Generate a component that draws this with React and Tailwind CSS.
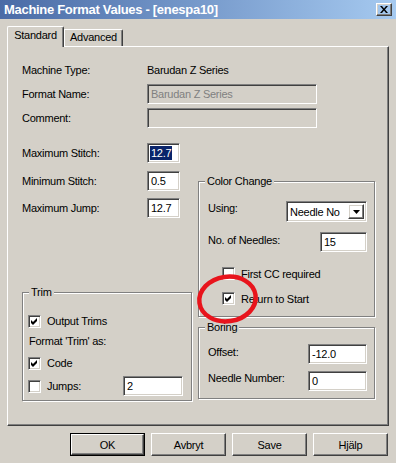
import React from 'react';

const sunken = 'border border-t-[#808080] border-l-[#808080] border-r-white border-b-white shadow-[inset_1px_1px_0_#404040,inset_-1px_-1px_0_#d4d0c8]';
const raised = 'border border-t-white border-l-white border-r-[#404040] border-b-[#404040] shadow-[inset_-1px_-1px_0_#808080,inset_1px_1px_0_#d4d0c8]';
const etched = 'border border-[#808080] shadow-[inset_1px_1px_0_#ffffff,1px_1px_0_#ffffff]';

const Field = ({ value, className = '', disabled, selected }) => (
    <div className={`${sunken} h-[20px] flex items-center pl-[3px] ${disabled ? 'bg-[#d4d0c8] text-[#808080]' : 'bg-white'} ${className}`}>
        {selected ? <span className="bg-[#0a246a] text-white leading-[14px] -ml-px px-px">{value}</span> : value}
    </div>
);

const Check = ({ checked }) => (
    <span className={`${sunken} w-[13px] h-[13px] bg-white flex items-center justify-center shrink-0`}>
        {checked && (
            <svg width="7" height="7" viewBox="0 0 7 7">
                <path d="M0 2 L2 4 L6 0 L6 3 L2 7 L0 5 Z" fill="#000" />
            </svg>
        )}
    </span>
);

const Group = ({ title, className = '', children }) => (
    <div className={`${etched} relative ${className}`}>
        <span className="absolute -top-[8px] left-[6px] bg-[#d4d0c8] px-[2px] leading-[14px]">{title}</span>
        {children}
    </div>
);

const Button = ({ label, isDefault }) => (
    <div className={`w-[75px] h-[23px] ${isDefault ? 'border border-black' : ''}`}>
        <div className={`${raised} w-full h-full flex items-center justify-center`}>{label}</div>
    </div>
);

const App = () => {
    return (
        <div className="w-[396px] h-[463px] bg-[#d4d0c8] relative overflow-hidden font-['Liberation_Sans',Arial,sans-serif] text-[11px] tracking-[-0.25px] leading-[14px] text-black">
            {/* title bar */}
            <div className="h-[19px] flex items-start justify-between bg-linear-to-r from-[#4a6ba6] to-[#a6caf0] pl-[4px] pr-[4px]">
                <span className="text-white font-bold text-[13px] leading-[19px] tracking-[-0.3px]">Machine Format Values - [enespa10]</span>
                <div className={`${raised} mt-[3px] w-[16px] h-[13px] flex items-center justify-center`}>
                    <svg width="8" height="7" viewBox="0 0 8 7">
                        <path d="M0 0h2l2 2.5 2-2.5h2L5 3.5 8 7H6L4 4.5 2 7H0l3-3.5z" fill="#000" />
                    </svg>
                </div>
            </div>

            {/* tabs */}
            <div className="mt-[7px] ml-[7px] h-[20px] flex items-end">
                <div className="relative z-10 w-[57px] h-[21px] -mb-[1px] bg-[#d4d0c8] border-l border-t border-r border-l-white border-t-white border-r-[#404040] rounded-t-[2px] shadow-[inset_-1px_0_0_#808080] flex justify-center pt-px">
                    Standard
                </div>
                <div className="w-[59px] h-[17px] border-t border-r border-l border-t-white border-l-white border-r-[#404040] rounded-tr-[2px] shadow-[inset_-1px_0_0_#808080] flex justify-center">
                    Advanced
                </div>
            </div>

            {/* panel */}
            <div className="ml-[7px] w-[382px] h-[380px] border border-t-white border-l-white border-r-[#404040] border-b-[#404040] shadow-[inset_-1px_-1px_0_#808080] pl-[14px] pt-[13px] flex flex-col">
                <div className="h-[20px] flex items-center">
                    <span className="w-[125px]">Machine Type:</span>
                    <span>Barudan Z Series</span>
                </div>
                <div className="mt-[4px] h-[20px] flex items-center">
                    <span className="w-[125px]">Format Name:</span>
                    <Field value="Barudan Z Series" disabled className="w-[170px]" />
                </div>
                <div className="mt-[4px] h-[20px] flex items-center">
                    <span className="w-[125px]">Comment:</span>
                    <Field value="" disabled className="w-[170px]" />
                </div>

                <div className="mt-[15px] flex gap-[6px]">
                    {/* left column */}
                    <div className="w-[170px] flex flex-col">
                        <div className="h-[20px] flex items-center">
                            <span className="w-[125px]">Maximum Stitch:</span>
                            <Field value="12.7" selected className="w-[33px]" />
                        </div>
                        <div className="mt-[8px] h-[20px] flex items-center">
                            <span className="w-[125px]">Minimum Stitch:</span>
                            <Field value="0.5" className="w-[33px]" />
                        </div>
                        <div className="mt-[7px] h-[20px] flex items-center">
                            <span className="w-[125px]">Maximum Jump:</span>
                            <Field value="12.7" className="w-[33px]" />
                        </div>

                        <Group title="Trim" className="mt-[74px] h-[109px] pl-[5px] pr-[8px] pt-[18px]">
                            <div className="h-[20px] flex items-center gap-[6px]">
                                <Check checked />
                                <span>Output Trims</span>
                            </div>
                            <div className="h-[20px] flex items-center pl-px">Format 'Trim' as:</div>
                            <div className="mt-[2px] h-[20px] flex items-center gap-[6px]">
                                <Check checked />
                                <span>Code</span>
                            </div>
                            <div className="mt-[3px] h-[20px] flex items-center gap-[6px]">
                                <Check />
                                <span className="flex-1">Jumps:</span>
                                <Field value="2" className="w-[60px] h-[18px]" />
                            </div>
                        </Group>
                    </div>

                    {/* right column */}
                    <div className="w-[177px] flex flex-col">
                        <Group title="Color Change" className="mt-[38px] h-[136px] pl-[9px] pr-[7px] pt-[19px]">
                            <div className="h-[21px] flex justify-between items-start">
                                <span>Using:</span>
                                <div className={`${sunken} w-[81px] h-[21px] bg-white flex items-center justify-between pl-[3px] pr-[2px]`}>
                                    <span>Needle No</span>
                                    <div className={`${raised} w-[16px] h-[15px] flex items-center justify-center`}>
                                        <svg width="7" height="4" viewBox="0 0 7 4">
                                            <path d="M0 0h7L3.5 4z" fill="#000" />
                                        </svg>
                                    </div>
                                </div>
                            </div>
                            <div className="mt-[10px] h-[20px] flex justify-between items-start">
                                <span className="pt-px">No. of Needles:</span>
                                <Field value="15" className="w-[47px]" />
                            </div>
                            <div className="mt-[15px] h-[13px] flex items-center gap-[6px] ml-[14px]">
                                <Check />
                                <span>First CC required</span>
                            </div>
                            <div className="mt-[12px] h-[13px] flex items-center gap-[6px] ml-[14px]">
                                <Check checked />
                                <span>Return to Start</span>
                            </div>
                        </Group>

                        <Group title="Boring" className="mt-[10px] h-[72px] pl-[9px] pr-[7px] pt-[16px]">
                            <div className="h-[20px] flex justify-between items-start">
                                <span className="pt-px">Offset:</span>
                                <Field value="-12.0" className="w-[59px]" />
                            </div>
                            <div className="mt-[7px] h-[20px] flex justify-between items-start">
                                <span>Needle Number:</span>
                                <Field value="0" className="w-[59px]" />
                            </div>
                        </Group>
                    </div>
                </div>
            </div>

            {/* buttons */}
            <div className="mt-[7px] flex justify-end gap-[6px] pr-[8px]">
                <Button label="OK" isDefault />
                <Button label="Avbryt" />
                <Button label="Save" />
                <Button label="Hjälp" />
            </div>

            {/* red annotation circle */}
            <svg className="absolute left-[194px] top-[272px]" width="67" height="54" viewBox="0 0 67 54">
                <ellipse cx="33.5" cy="27" rx="28.3" ry="22.3" fill="none" stroke="#e8141c" strokeWidth="4.5" transform="rotate(-8 33.5 27)" />
            </svg>
        </div>
    );
};

export default App;
